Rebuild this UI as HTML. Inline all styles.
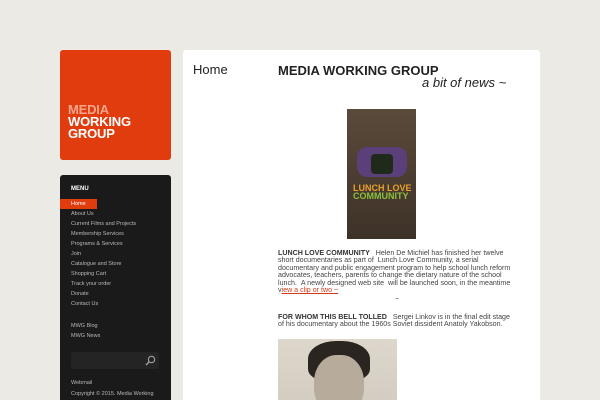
<!DOCTYPE html>
<html><head><meta charset="utf-8"><style>
*{margin:0;padding:0;box-sizing:border-box}
html,body{width:600px;height:400px;overflow:hidden}
body{background:#eceae4;font-family:"Liberation Sans",Arial,sans-serif;position:relative}
.logo{position:absolute;left:60px;top:50px;width:111px;height:110px;background:#e03c0e;border-radius:3px}
.logo div{position:absolute;left:8px;top:54px;font-weight:bold;font-size:13px;line-height:12px;color:#fff;letter-spacing:-0.2px}
.logo span{color:#f5a58a}
.menu{position:absolute;left:60px;top:175px;width:111px;height:240px;background:#1b1a1a;border-radius:3px}
.menu .t{position:absolute;left:11px;top:11px;font-size:6px;font-weight:bold;color:#fff}
.menu ul{list-style:none;position:absolute;left:0;top:24px;width:111px}
.menu li{height:10px;line-height:10px;font-size:5.5px;color:#b8b8b8;padding-left:11px}
.menu li.on{background:#e03c0e;color:#fff;width:37px}
.menu .x{position:absolute;left:11px;font-size:5.5px;color:#b8b8b8}
.search{position:absolute;left:11px;top:177px;width:88px;height:17px;background:#252424;border-radius:2px}
.panel{position:absolute;left:183px;top:50px;width:357px;height:360px;background:#fff;border-radius:3px}
.home{position:absolute;left:10px;top:12px;font-size:13px;color:#222}
.h1{position:absolute;left:95px;top:13px;font-size:13px;font-weight:bold;color:#222}
.sub{position:absolute;left:239px;top:25px;font-size:13px;font-style:italic;color:#222}
.poster{position:absolute;left:164px;top:59px;width:69px;height:130px;background:linear-gradient(#5a4a3a,#4a3c30 55%,#3e3228 100%)}
.poster .a{position:absolute;left:10px;top:38px;width:50px;height:30px;background:#5b3f78;border-radius:10px}
.poster .bowl{position:absolute;left:24px;top:45px;width:22px;height:20px;background:#1f2a1a;border-radius:4px}
.poster .b{position:absolute;left:6px;top:75px;font-size:9px;font-weight:bold;line-height:8px;color:#e8a22a}
.poster .b i{color:#8bc13c;font-style:normal}
.txt{position:absolute;left:95px;font-size:7.1px;line-height:7.4px;color:#444;white-space:nowrap}
.txt b{color:#333}
.txt a{color:#d23b1a}
.photo{position:absolute;left:95px;top:289px;width:119px;height:70px;background:linear-gradient(#ddd7cc,#d2ccc0);overflow:hidden}
.hair{position:absolute;left:30px;top:2px;width:62px;height:40px;border-radius:45% 45% 30% 30%;background:#2a2520}
.face{position:absolute;left:36px;top:16px;width:50px;height:60px;border-radius:45%;background:#b7ab9b}
</style></head><body>
<div class="logo"><div><span>MEDIA</span><br>WORKING<br>GROUP</div></div>
<div class="menu"><div class="t">MENU</div>
<ul><li class="on">Home</li><li>About Us</li><li>Current Films and Projects</li><li>Membership Services</li><li>Programs &amp; Services</li><li>Join</li><li>Catalogue and Store</li><li>Shopping Cart</li><li>Track your order</li><li>Donate</li><li>Contact Us</li></ul>
<div class="x" style="top:148px">MWG Blog</div><div class="x" style="top:158px">MWG News</div>
<div class="search"><svg style="position:absolute;right:3px;top:3px" width="11" height="11" viewBox="0 0 11 11"><circle cx="6.5" cy="4.5" r="3.2" fill="none" stroke="#aaa" stroke-width="1"/><path d="M4.2 6.8L1 10" stroke="#aaa" stroke-width="1.3"/></svg></div>
<div class="x" style="top:205px">Webmail</div><div class="x" style="top:216px">Copyright © 2015. Media Working</div>
</div>
<div class="panel">
<div class="home">Home</div>
<div class="h1">MEDIA WORKING GROUP</div>
<div class="sub">a bit of news ~</div>
<div class="poster"><div class="a"></div><div class="bowl"></div><div class="b">LUNCH LOVE<br><i>COMMUNITY</i></div></div>
<div class="txt" style="top:200px"><b>LUNCH LOVE COMMUNITY</b> &nbsp; Helen De Michiel has finished her twelve<br>short documentaries as part of &nbsp;Lunch Love Community, a serial<br>documentary and public engagement program to help school lunch reform<br>advocates, teachers, parents to change the dietary nature of the school<br>lunch. &nbsp;A newly designed web site &nbsp;will be launched soon, in the meantime<br>v<a href="#"><u>iew a clip or two ~</u></a></div>
<div class="txt" style="top:246px;left:212px">~</div>
<div class="txt" style="top:264px"><b>FOR WHOM THIS BELL TOLLED</b> &nbsp; Sergei Linkov is in the final edit stage<br>of his documentary about the 1960s Soviet dissident Anatoly Yakobson.</div>
<div class="photo"><div class="hair"></div><div class="face"></div></div>
</div>
</body></html>
